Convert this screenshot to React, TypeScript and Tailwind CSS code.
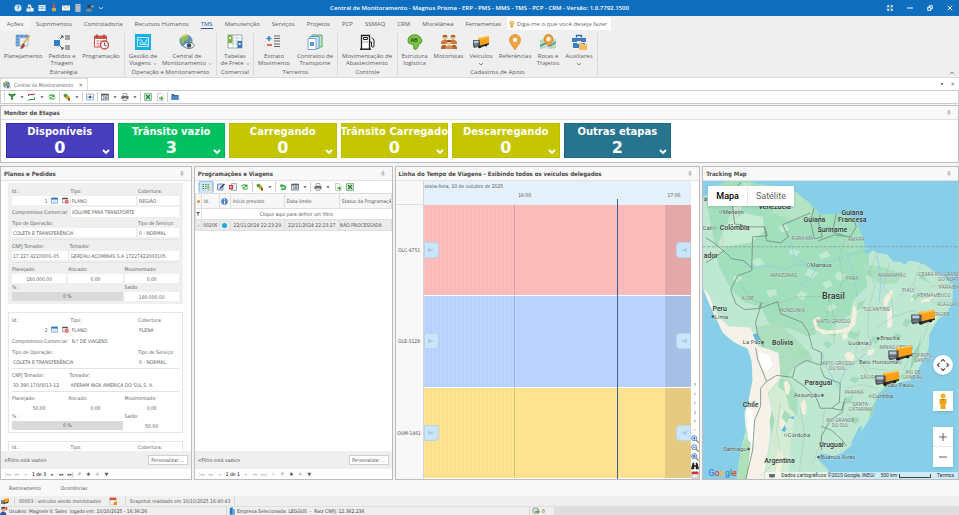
import React, { useId, useState } from "react";

type IconProps = { className?: string };
type Glyph = (p: IconProps) => React.ReactElement;

const draw = (children: React.ReactNode, viewBox = "0 0 16 16"): Glyph =>
  function Drawing({ className = "size-4" }: IconProps) {
    return (
      <svg viewBox={viewBox} className={`${className} shrink-0`} fill="none" aria-hidden="true">
        {children}
      </svg>
    );
  };

/* ---------- ribbon icons ---------- */
const PlanIcon = draw(
  <>
    <path d="M1 1h12v11H1z" fill="#fff" stroke="#a9b4c6" />
    <path d="M1 1h12v3H1zM1 4h4v8H1z" fill="#5b95d6" />
    <path d="M5 1v11M9 1v11M1 4h12M1 7h12M1 10h12" stroke="#b9c7dd" strokeWidth=".7" />
    <path d="M15.5 2 9 10l-1-1 6-8z" fill="#e8a33c" />
    <path d="m8 9 2 2c-1 3-3 4-5 4 1-1 1-4 3-6z" fill="#a3492f" />
  </>,
);
const TriageIcon = draw(
  <>
    <path d="M0 6h6v6H0z" fill="#2f80c8" />
    <path d="M11 1h5v5h-5zM11 11h5v5h-5z" fill="#a2a2a2" />
    <path d="M6 5 9 2M9 2H7m2 0v2M6 12l3 3m0 0H7m2 0v-2" stroke="#444" />
  </>,
);
const ScheduleIcon = draw(
  <>
    <path d="M1.5 2h12v11h-12z" fill="#fff" stroke="#d0564b" />
    <path d="M1 2h13v3H1z" fill="#d0564b" />
    <path d="M4 .5v3M11 .5v3" stroke="#a23a33" strokeWidth="1.4" />
    <path d="M3 7h8M3 9.500h6M3 12h4M5 6v7M8 6v4" stroke="#dd9089" strokeWidth=".8" />
    <circle cx="11.500" cy="11" r="4" fill="#f6f2f2" stroke="#c9463c" strokeWidth="1.300" />
    <path d="M11.500 8.500V11l2 1" stroke="#555" />
  </>,
);
const TripsIcon = draw(
  <>
    <path d="M0 0h16v16H0z" fill="#16aee8" />
    <path d="M2.500 3.500h11v9h-11zM2.500 6H7v3h4V6h2M5 8v2.500h8" stroke="#d6f3fd" strokeWidth=".9" />
  </>,
);
const GlobeEyeIcon = draw(
  <>
    <circle cx="7" cy="7" r="6.500" fill="#5f8fc4" />
    <path d="M3 2c3-2 6-1 7 1L8 6 5 7 4 10C1 8 1 4 3 2zM9 8l4-1c0 3-1 5-3 6z" fill="#8cc152" />
    <path d="M2 4c2-3 5-3.500 7-3" stroke="#f0d080" strokeWidth="1.200" />
    <path d="M4 11.500c3-4 9-4 12 0-3 4-9 4-12 0z" fill="#e9eef4" stroke="#555e6a" strokeWidth=".8" />
    <circle cx="10" cy="11.500" r="2.200" fill="#34506e" />
  </>,
);
const FreightIcon = draw(
  <>
    <path d="M1 1h14v13H1z" fill="#fff" stroke="#9aa8b4" />
    <path d="M1 4h14M1 7h14M1 10h14M6 1v13M10 1v13" stroke="#b2c0cb" strokeWidth=".7" />
    <path d="M1 1h4.500v8H1z" fill="#7db344" />
    <path d="M10.500 7H15v7h-4.500z" fill="#3a78b8" />
    <circle cx="3.200" cy="4" r="1.100" fill="#fff" />
    <circle cx="12.700" cy="10" r="1.100" fill="#fff" />
  </>,
);
const StatementIcon = draw(
  <>
    <path d="M3 2v5M.5 4.500h5" stroke="#2f80c8" strokeWidth="1.500" />
    <path d="M1 11h5" stroke="#d0453a" strokeWidth="1.500" />
    <path d="M8 2h6M8 4.500h6M8 7h6M8 10h6M8 12.500h6" stroke="#555" strokeWidth=".9" />
  </>,
);
const ContractsIcon = draw(
  <>
    <path d="M5 1h10v12H5z" fill="#bfe3c4" stroke="#59a869" />
    <path d="M3 2.500h9v12H3z" fill="#d3e7f8" stroke="#5c9bd1" />
    <path d="M1 4.500h8v11H1z" fill="#fff" stroke="#7aa7cc" />
    <path d="M3 8h4v4H3z" fill="#5c9bd1" />
  </>,
);
const FuelIcon = draw(
  <>
    <path d="M2.500 15V1.500h8V15" fill="#fff" stroke="#222" strokeWidth="1.300" />
    <path d="M1 15.200h11" stroke="#222" strokeWidth="1.500" />
    <path d="M4.500 3.500h4v2h-4zM4.500 8h1m2 0h1" stroke="#222" />
    <path d="M11 8h1.500v4c0 1.600 2.500 1.600 2.500 0V6l-2-2.500" stroke="#222" />
  </>,
);
const AfricaIcon = draw(
  <>
    <path
      d="M2 3c2-2 5-2.500 8-2l3 2 2 4-1 2-2 1-1 3-2 2.500-2-.5-.5-4-2-1-3-1L1 6z"
      fill="#7cc242"
      stroke="#4c9a2a"
    />
    <text x="7" y="8" textAnchor="middle" fontSize="5" fontWeight="bold" fill="#1d4f10" fontFamily="Liberation Sans, sans-serif">AB</text>
  </>,
);
const DriversIcon = draw(
  <>
    <path d="M0 14c0-4 5-4 6-1v2H0zM16 14c0-4-5-4-6-1v2h6z" fill="#b2642c" />
    <circle cx="4" cy="3.500" r="2.300" fill="#e7b483" />
    <circle cx="12" cy="3.500" r="2.300" fill="#e7b483" />
    <path d="M1.500 3c0-3 5-3 5 0zM9.500 3c0-3 5-3 5 0z" fill="#a85f26" />
    <path d="M0 9c0-4 7-4 8-1 1-3 8-3 8 1v1H0z" fill="#c97b39" />
    <circle cx="8" cy="8.500" r="2.300" fill="#f0c49a" />
    <path d="M5.500 8c0-3 5-3 5 0z" fill="#96501f" />
    <path d="M4 15c0-5 8-5 8 0z" fill="#d68b48" />
  </>,
);
const TruckShape = (
  <>
    <path d="m5 4 10-2 1 1v7l-9 3z" fill="#f9a11b" />
    <path d="m5 4 10-2 1 1-9 2z" fill="#ffc861" />
    <path d="M0 6h6l1 .5v6L1 14 0 12z" fill="#4b5058" />
    <path d="M.8 6.800h4.700v2.500H.8z" fill="#b9cbd8" />
    <path d="M1 10.500h4M1 12h4" stroke="#9aa0a7" strokeWidth=".7" />
    <path d="m7 11.500 9-2.500v1.200L7 14z" fill="#333" />
    <circle cx="6.500" cy="13" r="1.300" fill="#1c1c1c" />
    <circle cx="13" cy="11.300" r="1.200" fill="#1c1c1c" />
  </>
);
const TruckIcon = draw(TruckShape);
const PinIcon = draw(
  <>
    <path d="M8 16C6 12 2.500 9.500 2.500 6a5.500 5.500 0 0 1 11 0c0 3.500-3.500 6-5.500 10z" fill="#f2a53a" stroke="#c77b1c" strokeWidth=".6" />
    <circle cx="8" cy="6" r="2.800" fill="#fdf3dd" stroke="#c77b1c" strokeWidth=".6" />
  </>,
);
const RoutesIcon = draw(
  <>
    <path d="m0 6 5-1 5 1 6-1v9l-6 1-5-1-5 1z" fill="#b9dca9" />
    <path d="m5 5 5 1v9l-5-1z" fill="#cfe3f4" />
    <path d="m0 12 6-3 4 3 6-4" stroke="#3b86c8" strokeWidth="1.400" />
    <path d="M8.500 13C7 10 4 8 4 5a4.500 4.500 0 0 1 9 0c0 3-3 5-4.500 8z" fill="#f0a03a" stroke="#b56d18" strokeWidth=".6" />
    <circle cx="8.500" cy="5" r="2.200" fill="#fdf3dd" />
  </>,
);
const CaseIcon = draw(
  <>
    <path d="M5.500 3.500v-2h5v2" stroke="#3270b5" strokeWidth="1.400" />
    <path d="M1 4h14v4H1zM2 9h12v5H2z" fill="#3b7cc4" />
    <path d="M6 7h4v3H6z" fill="#dfe9f5" />
    <path d="M8 9h3l1 1h4v6H8z" fill="#f2bd63" />
  </>,
);

/* ---------- small toolbar icons ---------- */
const FunnelGreen = draw(<><path d="M1 2h14L10 8v7l-4-2V8z" fill="#35a043" /><circle cx="3" cy="3" r="2" fill="#1d6c2a" /><circle cx="13" cy="3" r="2" fill="#1d6c2a" /></>);
const RouteRed = draw(<><path d="M1 3h9M1 3v3m9-3 4-1" stroke="#d0342c" strokeWidth="2.200" /><path d="M4 13h9M4 13l-3 2m12-6v4" stroke="#2fa33e" strokeWidth="2.200" /></>);
const RefreshGreen = draw(<><path d="M1 7c1-5 8-6 10-3l2-2v6H7l2-2C7 4 4 5 4 7z" fill="#33a347" /><path d="M15 9c-1 5-8 6-10 3l-2 2V8h6l-2 2c2 2 5 1 5-1z" fill="#5cbf5c" /></>);
const Puzzle = draw(<><path d="M1 3 6 1l4 4-3 5-5-2z" fill="#4da23f" /><path d="m6 7 5-2 3 4-3 4-5-1z" fill="#d9a326" /><path d="m10 10 4 1v4h-4z" fill="#6c4c1e" /></>);
const FitScreen = draw(<><path d="M1 2h14v12H1z" stroke="#7f9cc6" strokeWidth="1.500" /><path d="M8 3v10M2 8h12" stroke="#7fa1ce" strokeWidth="2" /><path d="M6 6h4v4H6z" fill="#2f5c9c" /></>);
const Layout = draw(<><path d="M1 2h14v12H1z" fill="#eceff2" stroke="#5b6570" strokeWidth="1.500" /><path d="M1 2h14v3H1z" fill="#5b6570" /><circle cx="10" cy="9.500" r="3.500" fill="#8c98a4" /><path d="M5 5v9" stroke="#5b6570" /></>);
const Printer = draw(<><path d="M4 1h8v5H4z" fill="#fff" stroke="#666" /><path d="M1 6h14v6H1z" fill="#6d7176" /><path d="M4 10h8v5H4z" fill="#e9e9e9" stroke="#666" /></>);
const Excel = draw(<><path d="M1 1h14v14H1z" fill="#d6ead9" stroke="#6aa977" strokeWidth="1.500" /><path d="m4 4 8 8m0-8-8 8" stroke="#1f7a36" strokeWidth="2.400" /></>);
const ExportDoc = draw(<><path d="M3 1h7l4 4v10H3z" fill="#fff" stroke="#9a9a9a" /><path d="M6 9h4V6l5 5-5 4v-3H6z" fill="#52b043" /></>);
const FolderBlue = draw(<><path d="M1 2h5l1 2h8v10H1z" fill="#356ba8" /><path d="M1 6h14v8H1z" fill="#4f88c6" /></>);
const GridFilter = draw(<><path d="M1 2h3v2H1zm5 0h3v2H6zm5 0h3v2h-3zM1 6h3v2H1zm5 0h3v2H6zm5 0h3v2h-3zM1 10h3v2H1zm5 0h3v2H6z" fill="#3f9a4c" /><path d="M9 9h7l-2.500 3v3h-2v-3z" fill="#ef9b28" /></>);
const Edit = draw(<><path d="M1 2h11v12H1z" fill="#d4e3f5" stroke="#2f5c9c" strokeWidth="1.300" /><path d="m5 12 1-3 8-8 2 2-8 8z" fill="#333f56" /></>);
const DeleteDoc = draw(<><path d="M5 1h10v14H5z" fill="#e4ecf6" stroke="#5478a8" /><path d="M0 4h8v9H0z" fill="#d62d24" /><path d="m2 6 4 5m0-5-4 5" stroke="#fff" strokeWidth="1.300" /></>);
const Undo = draw(<path d="M7 1v3h3c6 0 6 10 0 10H4v-3h6c2 0 2-4 0-4H7v3L1 5.500z" fill="#2fa33e" />);
const CalBlue = draw(<><path d="M1 2h14v12H1z" fill="#fff" stroke="#4b8ac6" strokeWidth="1.500" /><path d="M1 2h14v4H1z" fill="#2d77bd" /><path d="M1 10h14M6 6v8M10 6v8" stroke="#a9c6e0" /></>);
const CalRed = draw(<><path d="M1 3h12v10H1z" fill="#f3f3f3" stroke="#666" strokeWidth="1.300" /><path d="M1 2h12v3H1z" fill="#4a4a4a" /><circle cx="11" cy="11" r="4.500" fill="#e15b56" /><path d="m8.500 13 5-4" stroke="#fff" strokeWidth="1.300" /></>);
const Info = draw(<><circle cx="8" cy="8" r="7.500" fill="#4f85c4" /><path d="M8 3v2m0 2v6" stroke="#fff" strokeWidth="2.400" /></>);
const Pin = draw(<path d="M5 2h6M6 2v6m4-6v6M3.500 8.500h9M8 9v5" stroke="#8a8a8a" strokeWidth="1.400" />);
const Caret = draw(<path d="M1 3h8L5 8z" fill="#555" />, "0 0 10 10");
const ChevronDown = draw(<path d="m1.500 3.500 3.500 3 3.500-3" stroke="currentColor" strokeWidth="1.200" />, "0 0 10 10");

/* ---------- title bar ---------- */
const quickAccess: { label: string; icon: Glyph; gap: string }[] = [
  { label: "Ajuda", gap: "ml-3.5", icon: draw(<><circle cx="8" cy="8" r="7" fill="#d8ecfb" /><path d="M6 5c1-3 5-1 4 1L8 9v1m0 2v1" stroke="#2b77bd" strokeWidth="2" /></>) },
  { label: "Usuários", gap: "ml-1", icon: draw(<><path d="M4 1h5l2 4v10H3z" fill="#cfe3f5" /><path d="M1 9h5v6H1zm9-1h5v7h-5z" fill="#eef6fc" /><path d="M5 6h3v3H5z" fill="#2c4e78" /></>) },
  { label: "Painel", gap: "ml-1", icon: draw(<><path d="M1 2h14v12H1z" fill="#eaf6ff" /><path d="M2 5h12M8 5v8M2 9h12" stroke="#65b2e4" strokeWidth="1.500" /></>) },
  { label: "Medalha", gap: "ml-1", icon: draw(<><path d="M6 0h4v6H6z" fill="#e44b3c" /><circle cx="8" cy="11" r="4" fill="#f7c33c" /><circle cx="8" cy="11" r="2" fill="#dd7a1e" /></>) },
  { label: "Mensagens", gap: "ml-1", icon: draw(<><path d="M0 3h16v10H0z" fill="#f5f0ea" /><path d="m0 3 8 6 8-6" stroke="#9aa3ad" strokeWidth="1.300" /></>) },
  { label: "Calculadora", gap: "ml-1", icon: draw(<><path d="M3 0h10v16H3z" fill="#c9cdd2" /><path d="M5 2h6v3H5z" fill="#7e98ad" /><path d="M5 8h6M5 11h6M5 14h6" stroke="#80868d" strokeWidth="1.500" strokeDasharray="1.500 .8" /></>) },
  { label: "Suporte", gap: "ml-1", icon: draw(<><circle cx="6" cy="5" r="3.500" fill="#3d3a3c" /><path d="M0 15c0-8 11-8 12 0z" fill="#8f8780" /><path d="m9 6 6-4v5z" fill="#d1a784" /></>) },
];

function TitleBar() {
  return (
    <header className="relative flex h-4 shrink-0 items-center bg-[#106ebe] text-white">
      {quickAccess.map(({ label, icon: I, gap }) => (
        <button key={label} aria-label={label} className={gap}>
          <I className="size-2" />
        </button>
      ))}
      <button aria-label="Personalizar barra" className="ml-1">
        <ChevronDown className="size-1.5" />
      </button>
      <h1 className="absolute inset-x-0 text-center font-['Open_Sans',sans-serif] text-[6px] leading-4 font-semibold">
        Central de Monitoramento - Magnus Prisma - ERP - PMS - MMS - TMS - PCP - CRM - Versão: 1.0.7792.1500
      </h1>
      <div className="relative ml-auto flex items-center gap-3.5 pr-1.5">
        <button aria-label="Tela cheia">
          <svg viewBox="0 0 8 8" className="size-1.5" fill="none" stroke="#fff" strokeWidth="1.300"><path d="m1 1 2 2m2 2 2 2M7 1 5 3M3 5 1 7M1 3V1h2M5 1h2v2M7 5v2H5M3 7H1V5" /></svg>
        </button>
        <button aria-label="Minimizar">
          <svg viewBox="0 0 8 8" className="size-1.5" stroke="#fff" strokeWidth="1.300"><path d="M0 4h8" /></svg>
        </button>
        <button aria-label="Restaurar">
          <svg viewBox="0 0 8 8" className="size-1.5" fill="none" stroke="#fff" strokeWidth="1.300"><path d="M1 3h4v4H1zM3 3V1h4v4H5" /></svg>
        </button>
        <button aria-label="Fechar">
          <svg viewBox="0 0 8 8" className="size-1.5" stroke="#fff" strokeWidth="1.300"><path d="m1 1 6 6m0-6L1 7" /></svg>
        </button>
      </div>
    </header>
  );
}

/* ---------- ribbon ---------- */
const ribbonTabs = ["Suprimentos", "Controladoria", "Recursos Humanos", "TMS", "Manutenção", "Serviços", "Projetos", "PCP", "SSMAQ", "CRM", "Miscelânea", "Ferramentas"];

type Item = { lines: string[]; icon: Glyph; width: string; menu?: boolean };
const ribbonGroups: { title: string; width: string; items: Item[] }[] = [
  {
    title: "Estratégia",
    width: "w-[125px] pl-[3px]",
    items: [
      { lines: ["Planejamento"], icon: PlanIcon, width: "w-10" },
      { lines: ["Pedidos e", "Triagem"], icon: TriageIcon, width: "w-[38px]" },
      { lines: ["Programação"], icon: ScheduleIcon, width: "w-10" },
    ],
  },
  {
    title: "Operação e Monitoramento",
    width: "w-[92px]",
    items: [
      { lines: ["Gestão de", "Viagens"], icon: TripsIcon, width: "w-9", menu: true },
      { lines: ["Central de", "Monitoramento"], icon: GlobeEyeIcon, width: "w-[52px]", menu: true },
    ],
  },
  { title: "Comercial", width: "w-[37px]", items: [{ lines: ["Tabelas", "de Frete"], icon: FreightIcon, width: "w-9", menu: true }] },
  {
    title: "Terceiros",
    width: "w-[84px]",
    items: [
      { lines: ["Extrato", "Movimento"], icon: StatementIcon, width: "w-10" },
      { lines: ["Contratos de", "Transporte"], icon: ContractsIcon, width: "w-[42px]" },
    ],
  },
  { title: "Controle", width: "w-[60px]", items: [{ lines: ["Movimentação de", "Abastecimento"], icon: FuelIcon, width: "w-[58px]" }] },
  {
    title: "Cadastros de Apoio",
    width: "w-[200px]",
    items: [
      { lines: ["Estrutura", "logística"], icon: AfricaIcon, width: "w-[33px]" },
      { lines: ["Motoristas"], icon: DriversIcon, width: "w-[35px]" },
      { lines: ["Veículos", ""], icon: TruckIcon, width: "w-[30px]", menu: true },
      { lines: ["Referências"], icon: PinIcon, width: "w-[38px]" },
      { lines: ["Rotas e", "Trajetos"], icon: RoutesIcon, width: "w-[28px]" },
      { lines: ["Auxiliares", ""], icon: CaseIcon, width: "w-[34px]", menu: true },
    ],
  },
];

function Ribbon() {
  return (
    <div className="shrink-0 border-b border-[#dcdcdc] bg-[#efefef] font-['Open_Sans',sans-serif] text-[6px] text-[#5c5c5c]">
      <nav className="flex h-[15px] items-stretch">
        <button className="w-[30px] bg-[#f5f5f5]">Ações</button>
        {ribbonTabs.map((t) => (
          <button key={t} className="px-1.5">
            <span className={t === "TMS" ? "block border-b border-[#2b579a] pt-px text-[#2b579a]" : ""}>{t}</span>
          </button>
        ))}
        <label className="my-px flex w-[104px] items-center gap-0.5 bg-white pl-0.5">
          <svg viewBox="0 0 8 10" className="h-2 w-1.5"><circle cx="4" cy="4" r="3.500" fill="#f3bf62" /><path d="M2.500 7h3v3h-3z" fill="#b98c45" /></svg>
          <input aria-label="Pesquisar comandos" placeholder="Diga-me o que você deseja fazer" className="w-full bg-transparent outline-none placeholder:text-[#6b6b6b]" />
        </label>
      </nav>
      <div className="flex h-[46px] pt-0.5 pb-px">
        {ribbonGroups.map((g) => (
          <section key={g.title} className={`flex shrink-0 flex-col border-r border-[#dadada] ${g.width}`}>
            <div className="flex flex-1">
              {g.items.map((it) => (
                <button key={it.lines[0]} className={`flex shrink-0 flex-col items-center ${it.width}`}>
                  <it.icon className="mt-px size-4" />
                  {it.lines.map((l, i) => (
                    <span key={i} className={`flex items-center justify-center whitespace-nowrap leading-[7px] ${i === 0 ? "mt-[3px]" : ""}`}>
                      {l}
                      {it.menu && i === it.lines.length - 1 && <ChevronDown className={l ? "ml-0.5 size-1" : "mt-px size-1.5"} />}
                    </span>
                  ))}
                </button>
              ))}
            </div>
            <h2 className="text-center leading-[8px]">{g.title}</h2>
          </section>
        ))}
        <button aria-label="Recolher faixa" className="mr-1 ml-auto self-end">
          <ChevronDown className="size-1.5 rotate-180" />
        </button>
      </div>
    </div>
  );
}

/* ---------- toolbars ---------- */
type Tool = { label: string; icon: Glyph; menu?: boolean; sep?: boolean; active?: boolean };

const mainTools: Tool[] = [
  { label: "Filtrar", icon: FunnelGreen, menu: true },
  { label: "Rotas", icon: RouteRed, menu: true },
  { label: "Atualizar", icon: RefreshGreen },
  { label: "Extensões", icon: Puzzle, menu: true, sep: true },
  { label: "Ajustar", icon: FitScreen, sep: true },
  { label: "Layout", icon: Layout, menu: true, sep: true },
  { label: "Imprimir", icon: Printer, menu: true },
  { label: "Exportar Excel", icon: Excel, sep: true },
  { label: "Exportar", icon: ExportDoc },
  { label: "Pasta", icon: FolderBlue, sep: true },
];
const tripTools: Tool[] = [
  { label: "Linha de filtro", icon: GridFilter, active: true },
  { label: "Editar", icon: Edit, sep: true },
  { label: "Excluir", icon: DeleteDoc },
  { label: "Atualizar", icon: RefreshGreen },
  { label: "Extensões", icon: Puzzle, menu: true, sep: true },
  { label: "Desfazer", icon: Undo, sep: true },
  { label: "Layout", icon: Layout, menu: true },
  { label: "Imprimir", icon: Printer, menu: true, sep: true },
  { label: "Exportar", icon: ExportDoc },
  { label: "Exportar Excel", icon: Excel },
];

function Toolbar({ tools }: { tools: Tool[] }) {
  return (
    <div role="toolbar" className="flex h-3 shrink-0 items-center bg-white pl-[3px]">
      <span className="mr-px h-2 border-l border-dotted border-[#bbb]" />
      {tools.map((t) => (
        <React.Fragment key={t.label}>
          {t.sep && <span className="mx-px h-2.5 w-px bg-[#cfcfcf]" />}
          <button aria-label={t.label} className={`flex h-[11px] items-center px-0.5 ${t.active ? "bg-[#cde6f7] outline outline-[#9ccbee]" : ""}`}>
            <t.icon className="size-2" />
            {t.menu && <Caret className="ml-1 size-1" />}
          </button>
        </React.Fragment>
      ))}
    </div>
  );
}

/* ---------- panels ---------- */
function Panel({ title, pin = true, className = "", children }: { title: string; pin?: boolean; className?: string; children: React.ReactNode }) {
  return (
    <section className={`flex min-h-0 min-w-0 flex-col border border-[#bdbdbd] bg-white ${className}`}>
      <header className="flex h-[14px] shrink-0 items-center justify-between border-b border-[#e2e2e2] bg-[#f8f8f8] pr-1.5 pl-[3px]">
        <h2 className="font-['DejaVu_Sans_Condensed','DejaVu_Sans',sans-serif] text-[6px] font-bold whitespace-nowrap text-[#4a4a4a]">{title}</h2>
        {pin && (
          <button aria-label={`Fixar ${title}`}>
            <Pin className="size-1.5" />
          </button>
        )}
      </header>
      {children}
    </section>
  );
}

const stages = [
  { name: "Disponíveis", count: 0, color: "bg-[#483dbd] border-[#3328b5]" },
  { name: "Trânsito vazio", count: 3, color: "bg-[#03c160] border-[#03b458]" },
  { name: "Carregando", count: 0, color: "bg-[#c5c500] border-[#bdbd00]" },
  { name: "Trânsito Carregado", count: 0, color: "bg-[#c5c500] border-[#bdbd00]" },
  { name: "Descarregando", count: 0, color: "bg-[#c5c500] border-[#bdbd00]" },
  { name: "Outras etapas", count: 2, color: "bg-[#27748f] border-[#1f6a85]" },
];

function Stages() {
  return (
    <Panel title="Monitor de Etapas" className="mt-px shrink-0">
      <div className="grid w-[670px] grid-cols-6 gap-1 pt-[3px] pb-1 pl-[5px]">
        {stages.map((s) => (
          <button key={s.name} className={`relative flex h-[35px] flex-col items-center border font-['DejaVu_Sans',sans-serif] font-bold text-white ${s.color}`}>
            <span className="text-[10px] leading-4 whitespace-nowrap">{s.name}</span>
            <span className="text-[16px] leading-4">{s.count}</span>
            <svg viewBox="0 0 8 6" className="absolute right-[3px] bottom-0.5 h-1.5 w-2" fill="none" stroke="#fff" strokeWidth="1.800"><path d="m1 1 3 3 3-3" /></svg>
          </button>
        ))}
      </div>
    </Panel>
  );
}

function Footer({ count, next }: { count: string; next?: boolean }) {
  const off = "text-[#c4c4c4]";
  const on = "text-[#555]";
  const nav: [string, string, string][] = [
    ["Primeiro", "|◂◂", off],
    ["Página anterior", "◂◂", off],
    ["Anterior", "◂", off],
  ];
  const tail: [string, string, string][] = [
    ["Próximo", "▸", next ? on : off],
    ["Próxima página", "▸▸", next ? on : off],
    ["Último", "▸▸|", next ? on : off],
    ...(next ? [] : ([["Cancelar", "✕", off]] as [string, string, string][])),
    ["Recarregar", "↱", on],
    ["Marcar", "✱", on],
    ["Ir para marca", "✱", off],
    ["Filtro", "▼", on],
  ];
  return (
    <div className="mt-auto shrink-0">
      <div className="flex h-[18px] items-center justify-between bg-[#efefef] pr-[3px] pl-[3px] text-[#555]">
        <span>&lt;Filtro está vazio&gt;</span>
        <button className="h-2.5 w-10 border border-[#cfcfcf] bg-white leading-[8px]">Personalizar ...</button>
      </div>
      <div className="flex h-[10px] items-center bg-white pl-0.5">
        {nav.map(([l, g, c]) => (
          <button key={l} aria-label={l} className={`w-[9px] leading-none ${c}`}>{g}</button>
        ))}
        <span className="w-[18px] text-center">{count}</span>
        {tail.map(([l, g, c]) => (
          <button key={l} aria-label={l} className={`w-[9px] leading-none ${c}`}>{g}</button>
        ))}
      </div>
    </div>
  );
}

/* ---------- plans and orders ---------- */
type Order = {
  id: string; tipo: string; cobertura: string; compromisso: string; operacao: string; servico: string;
  cnpj: string; tomador: string; planejado: string; saldo: string;
};
const orders: Order[] = [
  { id: "1", tipo: "PLANO", cobertura: "REGIÃO", compromisso: "VOLUME PARA TRANSPORTE", operacao: "COLETA E TRANSFERÊNCIA", servico: "0 - NORMAL", cnpj: "17.227.422/0001-05", tomador: "GERDAU AÇOMINAS S.A 17227422000105", planejado: "180.000,00", saldo: "180.000,00" },
  { id: "2", tipo: "PLANO", cobertura: "PLENA", compromisso: "N.º DE VIAGENS", operacao: "COLETA E TRANSFERÊNCIA", servico: "0 - NORMAL", cnpj: "33.390.170/0013-12", tomador: "APERAM INOX AMÉRICA DO SUL S. A.", planejado: "50,00", saldo: "50,00" },
];

function Field({ label, value, align = "text-left", children }: { label: string; value: string; align?: string; children?: React.ReactNode }) {
  const id = useId();
  return (
    <div className="min-w-0">
      <label htmlFor={id} className="block h-[9px] leading-[9px] whitespace-nowrap">{label}</label>
      <div className="flex h-[9px] items-center gap-0.5 bg-white">
        <input id={id} readOnly value={value} className={`h-full w-full min-w-0 bg-transparent px-px outline-none ${align}`} />
        {children}
      </div>
    </div>
  );
}

function OrderCard({ order, selected }: { order: Order; selected: boolean }) {
  const id = useId();
  const rule = <hr className="my-0.5 border-[#e3e3e3]" />;
  return (
    <article className={`shrink-0 border px-[3px] pt-[3px] pb-0.5 ${selected ? "border-[#efefef] bg-[#efefef]" : "border-[#e6e6e6] bg-white"}`}>
      <div className="grid grid-cols-[57fr_66fr_41fr] gap-x-0.5">
        <Field label="Id.:" value={order.id} align="text-right">
          <CalBlue className="mr-0.5 size-[7px]" />
          <CalRed className="size-[7px]" />
        </Field>
        <Field label="Tipo:" value={order.tipo} />
        <Field label="Cobertura:" value={order.cobertura} />
      </div>
      <div className="my-0.5 grid grid-cols-[57fr_109fr] items-center gap-x-0.5">
        <label htmlFor={id} className="whitespace-nowrap">Compromisso Comercial:</label>
        <input id={id} readOnly value={order.compromisso} className="h-2.5 w-full min-w-0 bg-white px-px outline-none" />
      </div>
      <div className="grid grid-cols-[125fr_41fr] gap-x-0.5">
        <Field label="Tipo de Operação:" value={order.operacao} />
        <Field label="Tipo de Serviço:" value={order.servico} />
      </div>
      {rule}
      <div className="grid grid-cols-[56fr_110fr] gap-x-0.5">
        <Field label="CNPJ Tomador:" value={order.cnpj} />
        <Field label="Tomador:" value={order.tomador} />
      </div>
      {rule}
      <div className="grid grid-cols-3 gap-x-0.5">
        <Field label="Planejado:" value={order.planejado} align="text-center" />
        <Field label="Alocado:" value="0,00" align="text-center" />
        <Field label="Movimentado:" value="0,00" align="text-center" />
        <div className="col-span-2">
          <p className="h-[9px] leading-[9px]">% :</p>
          <div role="progressbar" aria-label="Percentual" aria-valuenow={0} className="h-[9px] bg-[#dadada] text-center leading-[9px]">0 %</div>
        </div>
        <Field label="Saldo:" value={order.saldo} align="text-center" />
      </div>
    </article>
  );
}

function OrdersPanel() {
  return (
    <Panel title="Planos e Pedidos">
      <div className="flex min-h-0 flex-1 flex-col gap-2 overflow-hidden pt-0.5 pr-2 pl-[7px] text-[#5f5f5f]">
        {orders.map((o, i) => <OrderCard key={o.id} order={o} selected={i === 0} />)}
        <article className="grid flex-1 grid-cols-[57fr_66fr_41fr] gap-x-0.5 border border-b-0 border-[#e6e6e6] px-[3px] pt-px">
          <span>Id.:</span>
          <span>Tipo:</span>
          <span>Cobertura:</span>
        </article>
      </div>
      <Footer count="1 de 3" next />
    </Panel>
  );
}

/* ---------- trips ---------- */
function TripsPanel() {
  const cell = "overflow-hidden border border-[#dedede] whitespace-nowrap";
  return (
    <Panel title="Programações e Viagens">
      <Toolbar tools={tripTools} />
      <table className="w-full table-fixed border-collapse text-[#555]">
        <colgroup>
          <col className="w-[6px]" /><col className="w-[18px]" /><col className="w-[11px]" />
          <col className="w-[54px]" /><col className="w-[55px]" /><col />
        </colgroup>
        <thead>
          <tr className="h-[15px] bg-[#f7f7f7] text-left">
            <th className={cell}><span className="mx-auto block size-[3px] rounded-full bg-[#ef8b1f]" /></th>
            <th className={`${cell} pl-0.5 font-normal`}>Id.</th>
            <th className={cell}><Info className="mx-auto size-[7px]" /></th>
            <th className={`${cell} pl-0.5 font-normal`}>Início previsto</th>
            <th className={`${cell} pl-0.5 font-normal`}>Data limite</th>
            <th className={`${cell} pl-0.5 font-normal`}>Status da Programação</th>
          </tr>
        </thead>
        <tbody>
          <tr className="h-[11px]">
            <td className={cell}><svg viewBox="0 0 10 10" className="mx-auto size-1"><path d="M0 0h10L6 5v5H4V5z" fill="#666" /></svg></td>
            <td colSpan={5} className="text-center">Clique aqui para definir um filtro</td>
          </tr>
          <tr className="h-[11px] bg-[#ebebeb]">
            <td className={`${cell} text-center`}>›</td>
            <td className={`${cell} text-center`}>00206</td>
            <td className={cell}><span className="mx-auto block size-[5px] rounded-full bg-[#16a7dd]" /></td>
            <td className={`${cell} text-center`}>22/11/2024 22:23:29</td>
            <td className={`${cell} text-center`}>22/11/2024 22:23:27</td>
            <td className={cell}>NÃO PROCESSADA</td>
          </tr>
        </tbody>
      </table>
      <Footer count="1 de 1" />
    </Panel>
  );
}

/* ---------- timeline ---------- */
const vehicles = [
  { plate: "OLC-4751", color: "bg-[#ffbcbc]" },
  { plate: "OLE-3128", color: "bg-[#bad4ff]" },
  { plate: "OUM-1461", color: "bg-[#ffe391]" },
];

const ZoomGlass = ({ sign }: { sign: string }) => (
  <svg viewBox="0 0 10 10" className="size-2" fill="none">
    <circle cx="4" cy="4" r="3.200" fill="#dcebfb" stroke="#4a79b4" />
    <path d={sign} stroke="#2a5b9b" />
    <path d="m6.500 6.500 3 3" stroke="#8c6a3d" strokeWidth="1.500" />
  </svg>
);

const rowSteppers: [string, string][] = [
  ["Primeira linha", "M2 1h4M4 7V3M2 4.500 4 2.500l2 2"],
  ["Página acima", "M2 3.500 4 1.500l2 2M2 6.500l2-2 2 2"],
  ["Página abaixo", "m2 1.500 2 2 2-2M2 4.500l2 2 2-2"],
  ["Última linha", "M2 7h4M4 1v4M2 3.500l2 2 2-2"],
  ["Mais linhas", "M4 1v6M1 4h6"],
  ["Menos linhas", "M1 4h6"],
];

function TimelinePanel() {
  const arrow = "absolute top-1/2 flex h-4 w-[15px] -translate-y-1/2 items-center justify-center border border-[#b4d6ee] bg-[#cbe6f8]";
  return (
    <Panel title="Linha do Tempo de Viagens - Exibindo todos os veículos delegados">
      <div className="flex min-h-0 flex-1 text-[#555]">
        <div className="flex w-7 shrink-0 flex-col border-r border-[#d5d5d5] bg-[#f8f8f8]">
          <div className="h-6 shrink-0 border-b border-[#dcdcdc]" />
          {vehicles.map((v) => (
            <div key={v.plate} className="flex flex-1 items-center justify-center border-b border-[#f8f8f8] whitespace-nowrap">{v.plate}</div>
          ))}
        </div>
        <div className="relative flex min-w-0 flex-1 flex-col">
          <div className="h-6 shrink-0 bg-[#e4f1fa] pl-px">
            <p className="leading-[10px]">sexta-feira, 10 de outubro de 2025</p>
            <div className="grid grid-cols-[92fr_150fr_26fr] leading-[9px]">
              <span />
              <span className="pl-0.5">16:00</span>
              <span className="pl-0.5">17:00</span>
            </div>
          </div>
          {vehicles.map((v) => (
            <div key={v.plate} className={`relative flex-1 border-b border-white ${v.color}`}>
              <div className="grid h-full grid-cols-[92fr_150fr_26fr]">
                <span className="border-r border-black/15 bg-[repeating-linear-gradient(90deg,transparent_0_3px,rgba(0,0,0,0.025)_3px_4px)]" />
                <span className="bg-[repeating-linear-gradient(90deg,transparent_0_3px,rgba(0,0,0,0.025)_3px_4px)]" />
                <span className="bg-black/10" />
              </div>
              <button aria-label={`Viagem anterior ${v.plate}`} className={`${arrow} left-0 rounded-r`}>
                <svg viewBox="0 0 8 8" className="size-1.5" stroke="#8ab6da" fill="none"><path d="M1 1v6M2 4h5M4 2.500 2.500 4 4 5.500" /></svg>
              </button>
              <button aria-label={`Próxima viagem ${v.plate}`} className={`${arrow} right-0 rounded-l`}>
                <svg viewBox="0 0 8 8" className="size-1.5" stroke="#8ab6da" fill="none"><path d="M7 1v6M1 4h5M4 2.500 5.500 4 4 5.500" /></svg>
              </button>
            </div>
          ))}
          <span className="absolute top-[18px] bottom-0 left-[72.4%] w-px bg-[#3f6291]" />
        </div>
        <div className="flex w-2 shrink-0 flex-col items-center justify-end bg-white">
          {rowSteppers.map(([l, d]) => (
            <button key={l} aria-label={l} className="flex h-[9px] items-center">
              <svg viewBox="0 0 8 8" className="size-1" fill="none" stroke="#888"><path d={d} /></svg>
            </button>
          ))}
          <button aria-label="Ampliar" className="h-[9px]"><ZoomGlass sign="M4 2.500v3M2.500 4h3" /></button>
          <button aria-label="Reduzir" className="h-[9px]"><ZoomGlass sign="M2.500 4h3" /></button>
          <button aria-label="Ajustar" className="h-[9px]"><ZoomGlass sign="M3 3h2v2H3z" /></button>
          <button aria-label="Localizar" className="h-[9px]">
            <svg viewBox="0 0 10 10" className="size-2" fill="#222"><path d="M2 1h2v3h2V1h2l2 8H6V6H4v3H0z" /></svg>
          </button>
          <button aria-label="Calendário" className="h-[9px]">
            <svg viewBox="0 0 10 10" className="size-2"><path d="M1 1h8v8H1z" fill="#eee" stroke="#aaa" /><path d="M1 1h8v3H1z" fill="#d22f27" /></svg>
          </button>
        </div>
      </div>
    </Panel>
  );
}

/* ---------- map ---------- */
type Label = [string, number, number];
const countries: Label[] = [
  ["Venezuela", 774, 208], ["Colômbia", 734, 229], ["Guiana", 814, 221], ["Guiana", 852, 214], ["Francesa", 852, 221],
  ["Suriname", 832, 231], ["ador", 710, 257], ["Peru", 719, 310], ["Bolívia", 782, 345],
  ["Paraguai", 818, 385], ["Chile", 750, 407], ["Uruguai", 831, 447], ["Argentina", 779, 463],
];
/* name, dot x, dot y, side of the dot the name stands on, filled dot for a capital */
const cities: [string, number, number, "start" | "end", boolean][] = [
  ["Medelín", 720, 211, "start", false], ["Cali", 714, 227, "end", false], ["Manaus", 808, 264, "start", false],
  ["Lima", 712, 316, "start", true], ["La Paz", 762, 342, "end", true], ["Goiânia", 870, 343, "end", false],
  ["Brasília", 878, 338, "start", true], ["Belo Horizonte", 900, 362, "end", false], ["São Paulo", 885, 385, "start", true],
  ["Assunção", 822, 395, "end", true], ["Curitiba", 870, 396, "start", false], ["Córdoba", 785, 435, "start", false],
  ["Santiago", 748, 449, "end", true], ["Buenos Aires", 818, 457, "start", true],
];
const states: Label[] = [
  ["RORAIMA", 802, 239], ["AMAPÁ", 856, 240], ["AMAZONAS", 783, 276], ["PARÁ", 852, 279], ["MARANHÃO", 892, 276],
  ["CEARÁ", 926, 275], ["RIO GRANDE", 949, 275], ["DO NORTE", 950, 280], ["PIAUÍ", 908, 291], ["PARAÍBA", 949, 288],
  ["PERNAMBUCO", 934, 296], ["ALAGOAS", 948, 305], ["ACRE", 747, 299], ["RONDÔNIA", 792, 311], ["TOCANTINS", 876, 310],
  ["SERGIPE", 940, 315], ["MATO GROSSO", 833, 322], ["MINAS GERAIS", 896, 349], ["ESPÍRITO", 922, 357], ["SANTO", 922, 362],
  ["MATO GROSSO", 837, 365], ["DO SUL", 837, 370], ["SÃO PAULO", 873, 379], ["RIO DE", 913, 374], ["JANEIRO", 913, 379],
  ["PARANÁ", 854, 394], ["SANTA", 860, 406], ["CATARINA", 860, 411], ["RIO GRANDE", 840, 422], ["DO SUL", 840, 427],
];

const LAND =
  "M702 197 707 193 711 185 718 184 724 181 735 180H748L756 183 785 186 797 192 802 197 808 201 815 208 819 213 833 213 847 214 855 219 859 228 862 236 864 245 869 248 877 252 887 254 893 261 900 261 905 264 909 260 917 261 925 264 933 270 945 277 952 283 953 293 952 303 947 312 938 319 933 327 929 335 929 347 923 360 920 366 915 374 910 380 900 382 887 388 878 393 875 402 873 413 867 422 860 433 855 443 848 448 842 453 833 456 820 453 818 460 828 470V480H736L738 463 741 447 745 430 744 413 748 400 752 380 751 360 747 348 733 342 722 332 713 313 707 300 702 287z";

const trucks = [[911, 308], [888, 344], [875, 369]];

function BrazilMap() {
  return (
    <svg viewBox="702 180 256 299" preserveAspectRatio="xMidYMid slice" className="absolute inset-0 size-full" role="img" aria-label="Mapa da América do Sul">
      <defs>
        <clipPath id="land"><path d={LAND} /></clipPath>
      </defs>
      <path d="M702 180h256v299H702z" fill="#87cfe8" />
      <path d={LAND} fill="#bfe8d3" />
      <g clipPath="url(#land)">
        <path d="M702 180h85l20 12 20 18 40 5 2 45-4 10 2 16-14 14-3 14-18 12 4 10-18-4-20-10-14 6-16-6-8-16-16-4-14-14-12-22z" fill="#a2dfbd" />
        <path d="m702 252 14-6 10-22 9-24 8-18h8l-10 24-10 24-12 24-17 10z" fill="#c3e6cd" />
        <path d="m780 184 26 12 8 18-22 6-20-8z" fill="#b4e4c4" />
        <path d="m722 226 22-14 18 4 2 14-14 12-26 4z" fill="#c6ebd3" />
        <path d="m702 288 6 6 8 20 12 12 22 1 8 19 22 7v24l-13 16 5 20-4 34-5 33h-17l4-40-7-20 4-70-45-30z" fill="#f6f2e9" />
        <path d="m758 352 10 2 4 10-6 8-6-8zM746 408l6 2 2 30-6 10z" fill="#fff" />
        <path d="m736 480 5-33 4-10 5 6-4 37z" fill="#aee0b9" />
        <path d="m780 378 10 14 4 24-4 26-2 38h-24l6-36 2-28-4-22z" fill="#d3ecd3" />
        <path d="m757 326 20-4 18 16 14 14 4 8-18 4-8 14-7-2-2-24-22-8z" fill="#addfbf" />
        <path d="m780 378 9 2 8 16 0 20-8-8-4-16-8-6z" fill="#a8dfbe" />
        <path d="m858 262 24 4 20 6-4 10-18 2-12-10zM840 240l16-4 8 10-14 6z" fill="#a9e0bf" />
        <path d="m880 392 9-10 12-4-9 8-10 10-6 24-9 8 4-20zM912 354l6-8 4-16-4 26-8 14z" fill="#98d8b0" />
        <path d="m776 310 20 2 14 8 6 14-8 2-14-6-16-6z" fill="#a6dfbd" />
        {/* dry uplands */}
        <g fill="#f3f0dd">
          <path d="m884 298 5-7 4-2-1 8-4 4-1 6-4-3zM887 311l5-3v18l-5 2zM812 320l6-4 3 3-5 4 3 5 8 2 14-1 8-3 2-8 2-14 4 4-2 16-6 7-12 2-14 1-8-5zM842 334l4-3 2 6-5 3zM921 300l8-3 6-6 5 3-8 3-3 4-8 1zM911 293l5-1-1 6-4 3zM937 316l-5 8-2-4zM844 354l4-3 7 4-3 6-5-1z" />
          <path d="m783 382 4-2 3 7-2 8-3-2zM800 403l4-4 2 6-1 10-4-2zM765 380l3 2-1 12-5 6zM781 408l4 12-3 10-3-6zM778 446l5 10-4 20-4-4zM868 350l7-2-3 6-5 1z" />
        </g>
        <g fill="#a3dcb9">
          <path d="m850 330 9 3-4 6-8-3zM873 335l7 3-4 6-6-4zM857 303l8-4-3 8-6 3zM868 268l6 3-4 5-5-2zM895 332l7 3-4 5-6-3zM905 318l7 2-5 7-5-3zM784 410l6 5-4 8-5-6zM852 376l8 2-5 5-6-3zM845 398l8-3-2 7-7 2zM853 416l7 2-5 6-5-3z" />
          <path d="m799 348 9 3-2 6-8-3zM826 340l6 4-4 4-5-4zM914 292l6 3-5 5-4-4zM898 376l7-3-1 4-7 3zM771 410l3 10-3 14-2-12zM916 272l8 3 6 7-8-3z" />
        </g>
        <g fill="#c0ead2">
          <path d="m750 260 9-3 5 6-9 3zM790 248l10 2-4 5-8-2zM808 268l10 4-6 6-8-4zM735 274l7 3-5 5-5-4zM765 290l10-2 2 6-8 3zM818 254l9-4 3 5-9 4zM800 290l7 4-5 6-6-5zM822 282l8-3 2 6-7 3zM837 270l8 4-5 7-6-5zM778 226l7-3 4 6-8 3zM826 306l7-3 4 4-8 4z" />
        </g>
        {/* rivers */}
        <g fill="none" stroke="#8fd0e4" strokeWidth=".9">
          <path d="m743 262 14 5 12-2 14 4 14-6 14 4 12-4 12-4 10-4 12-3 8-7M790 240l4 16 14 8M818 263l-8 16-12 6M847 256l6 18 4 22M877 256l4 20-2 26M822 353l4 14 12 20 6-16 12-10 10-8" />
        </g>
        <path d="m862 251 8-5 4 3-6 4zM850 446l2-6 6-12 4-3-1 6-6 12z" fill="#87cfe8" />
        <path d="m752 334 4-1 3 6-3 3zM781 430l3-5 2 4-2 3zM788 417l6-1-1 3z" fill="#66b9e8" />
        {/* state lines */}
        <g fill="none" stroke="#93a79d" strokeWidth=".5" strokeDasharray="1.500 1">
          <path d="m735 274 14 24 18 6 20-4 10-4h32l6 28-2 20M835 296l8-16-4-24 6-18M829 296l-3 24-16 10M877 252l-8 20 6 12-6 22-2 24 4 14-12 8M889 262l-6 26 8 6 2 22-18 12M921 262l-8 22-14 12M913 284l12 12 10 6 22-4M919 278l10-4M930 286l28-4M893 316l20-6 16 10-6 20-14 18-6 12M859 330l-4 26 14 12 18 2M845 366l14-6 10 16 10 6M847 388l14-4 16 4M840 402l16 0 14 2M846 414l12 8M780 404l-4 26 4 26-20 20M800 408l4 26-6 44M824 410l-4 34-8 20" />
        </g>
        {/* borders */}
        <g fill="none" stroke="#6f8a80" strokeWidth=".8">
          <path d="m740 181-8 12 0 14 2 16 14 3 16 0 2 14 14 2 8-6-6-12 14-6 14-6M764 226l3 9-15 1-1 34-14 5-7 14 5 14 9 6 14-1 3-6-6 20 2 12 6 12" />
          <path d="m705 262 10-6 8-6-10-8-8-5M723 250l8 8 12 2 9 8M814 206l-4 14 4 18 8-2-4-14 2-8M836 213l-4 18 12 4M852 214l4 12-6 10-16-2-16 6" />
          <path d="m759 308 18-7 3 12 22 9 6 10 4 16 9 4 0 13-15-5-11 6-3 11-16-2-10 6-9-22-2-12" />
          <path d="m792 378 12 8 12 12 4 10 11 0 8-6 1-19-16-6-4-10M766 381l-6 7 0 18-6 14-2 30-7 30M831 408l10 2 4-12M844 402l-2 10-12 8-9 16 0 14M821 426l10 4 11 10 4 6" />
        </g>
      </g>
      <path d="M702 246h256" stroke="#7b9198" strokeWidth=".7" strokeDasharray="3 1.500" />
      <g fontFamily="Roboto, sans-serif" textAnchor="middle" stroke="#fff" strokeOpacity=".5" strokeWidth=".6" paintOrder="stroke">
        {states.map(([t, x, y]) => <text key={t + x + y} x={x} y={y} fontSize="5" fill="#66766f">{t}</text>)}
        {cities.map(([t, x, y, side]) => (
          <text key={t} x={side === "start" ? x + 2 : x - 2} y={y + 2} textAnchor={side} fontSize="6" fill="#48554f">{t}</text>
        ))}
        <text x="703" y="200" textAnchor="start" fontSize="6" fill="#28322f">á</text>
        {countries.map(([t, x, y]) => <text key={t + x + y} x={x} y={y} fontSize="7" fontWeight="500" fill="#28322f">{t}</text>)}
        <text x="833" y="298" fontSize="9" fontWeight="500" fill="#28322f">Brasil</text>
      </g>
      {cities.map(([t, x, y, , capital]) => (
        <circle key={t} cx={x} cy={y} r="1.100" fill={capital ? "#48554f" : "#fff"} stroke="#48554f" strokeWidth=".5" />
      ))}
      {trucks.map(([x, y]) => (
        <svg key={x} x={x} y={y} width="24" height="17" viewBox="0 1 16 14" preserveAspectRatio="none">{TruckShape}</svg>
      ))}
    </svg>
  );
}

function MapPanel() {
  const [mode, setMode] = useState("Mapa");
  return (
    <Panel title="Tracking Map">
      <div className="relative min-h-0 flex-1 overflow-hidden font-[Roboto,sans-serif]">
        <BrazilMap />
        <div className="absolute top-[5px] left-[5px] flex h-5 divide-x divide-[#e8e8e8] bg-white text-[9px] shadow-sm">
          {["Mapa", "Satélite"].map((m) => (
            <button key={m} onClick={() => setMode(m)} className={`px-2 ${mode === m ? "font-medium text-black" : "text-[#666]"}`}>{m}</button>
          ))}
        </div>
        <div className="absolute right-[5px] bottom-3 flex w-5 flex-col text-[#666]">
          <button aria-label="Controles da câmera" className="flex size-5 items-center justify-center rounded-full bg-white shadow-sm">
            <svg viewBox="0 0 14 14" className="size-3.5" fill="none" stroke="#666" strokeWidth="1.400"><path d="m5 3.500 2-2 2 2M5 10.500l2 2 2-2M3.500 5l-2 2 2 2M10.500 5l2 2-2 2" /></svg>
          </button>
          <button aria-label="Street View" className="mt-4 flex size-5 items-center justify-center bg-white shadow-sm">
            <svg viewBox="0 0 10 16" className="h-4 w-2.5"><circle cx="5" cy="3" r="2.500" fill="#f4b22c" /><path d="M1.500 6h7v5H7.500v5h-5v-5h-1z" fill="#f0a41c" /><path d="M3 6h4l-2 2z" fill="#c97d10" /></svg>
          </button>
          <div className="mt-4 flex flex-col divide-y divide-[#e6e6e6] bg-white shadow-sm">
            <button aria-label="Aumentar zoom" className="flex h-5 items-center justify-center"><svg viewBox="0 0 10 10" className="size-2" stroke="#666" strokeWidth="1.300"><path d="M5 0v10M0 5h10" /></svg></button>
            <button aria-label="Diminuir zoom" className="flex h-5 items-center justify-center"><svg viewBox="0 0 10 10" className="size-2" stroke="#666" strokeWidth="1.300"><path d="M0 5h10" /></svg></button>
          </div>
        </div>
        <span className="absolute bottom-px left-[5px] flex text-[9px] leading-[10px] font-medium">
          <span className="text-[#4285f4]">G</span><span className="text-[#ea4335]">o</span><span className="text-[#fbbc05]">o</span>
          <span className="text-[#4285f4]">g</span><span className="text-[#34a853]">l</span><span className="text-[#ea4335]">e</span>
        </span>
        <div className="absolute right-0 bottom-0 flex h-[7px] items-center gap-1.5 bg-white/60 px-1 text-[5px] leading-[7px] whitespace-nowrap text-[#333]">
          <svg viewBox="0 0 8 6" className="h-1 w-1.5"><path d="M0 0h8v5H0z" fill="#444" /><path d="M1 1h6M1 3h6" stroke="#fff" strokeWidth=".7" strokeDasharray="1 .5" /></svg>
          <span>Dados cartográficos ©2025 Google, INEGI</span>
          <span>500 km</span>
          <span className="-ml-1 h-1 w-8 border border-t-0 border-[#444]" />
          <a href="#termos">Termos</a>
        </div>
      </div>
    </Panel>
  );
}

/* ---------- status bars ---------- */
function StatusBars() {
  return (
    <footer className="shrink-0 text-[#555]">
      <nav className="flex h-4 items-center gap-5 bg-[#f8f8f8] pl-[9px]">
        <button>Rastreamento</button>
        <button>Ocorrências</button>
      </nav>
      <div className="flex h-2.5 items-center bg-[#efefef]">
        <TruckIcon className="mx-px size-2" />
        <span className="ml-1 border-l border-[#d4d4d4] pl-1">00003 : veículos sendo monitorados</span>
        <svg viewBox="0 0 10 10" className="ml-2 size-2"><path d="M1 1h8v8H1z" fill="#fff" stroke="#bbb" /><path d="M1 1h8v3H1z" fill="#df4a32" /><path d="M6 6h4v4H6z" fill="#f08a24" /></svg>
        <span className="ml-2 border-x border-[#d4d4d4] px-1">Snapshot realizado em 10/10/2025 16:40:43</span>
      </div>
      <div className="flex h-[9px] items-center border-t border-[#dedede] bg-[#efefef] text-[#444]">
        <svg viewBox="0 0 10 10" className="size-2"><circle cx="4" cy="3" r="2.500" fill="#e9a87c" /><path d="M0 10c0-6 8-6 8 0z" fill="#2d5fae" /><path d="M1 2c1-3 5-3 6 0z" fill="#333" /><path d="M7 0h2v4H7z" fill="#e2412f" /></svg>
        <span className="w-[219px] border-r border-[#d4d4d4] pl-px">Usuário: Magnele V. Sales &nbsp;logado em: 10/10/2025 - 16:36:26</span>
        <svg viewBox="0 0 8 10" className="ml-0.5 h-2 w-1.5"><path d="M1 1 5 0v10H1z" fill="#2378c4" /><path d="M5 2l3 1v7H5z" fill="#63aee6" /></svg>
        <span className="w-[295px] border-r border-[#d4d4d4] pl-0.5">Empresa Selecionada: LEGGUS &nbsp;- &nbsp;Raiz CNPJ: 12.362.236</span>
        <svg viewBox="0 0 10 10" className="ml-0.5 size-2"><circle cx="4.500" cy="4.500" r="3.500" fill="#ddd" stroke="#aaa" strokeWidth="1.500" /><path d="M4 5h3V3l3 3-3 3V7H4z" fill="#49b53a" /></svg>
        <span className="w-3.5 pl-0.5">0</span>
        <span className="h-full flex-1 bg-[#dedede]" />
      </div>
    </footer>
  );
}

export default function App() {
  return (
    <div className="flex h-screen flex-col overflow-hidden bg-[#f3f3f3] font-['DejaVu_Sans_Condensed','DejaVu_Sans',sans-serif] text-[5px] leading-[8px]">
      <TitleBar />
      <Ribbon />
      <div className="flex h-3 shrink-0 items-stretch bg-white text-[#666]">
        <div className="flex w-[88px] items-center border border-b-0 border-[#dcdcdc] pl-0.5">
          <GlobeEyeIcon className="size-2" />
          <span className="ml-[3px] whitespace-nowrap">Central de Monitoramento</span>
          <button aria-label="Fechar aba" className="ml-auto pr-1 text-[6px]">×</button>
        </div>
        <div className="ml-auto flex items-center gap-1.5 pr-1">
          <button aria-label="Lista de abas"><Caret className="size-1" /></button>
          <button aria-label="Fechar documento" className="text-[6px]">×</button>
        </div>
      </div>
      <div className="shrink-0 border border-[#cccccc]">
        <Toolbar tools={mainTools} />
      </div>
      <Stages />
      <main className="mt-[3px] grid min-h-0 flex-1 grid-cols-[192fr_199fr_306fr_257fr] grid-rows-1 gap-0.5">
        <OrdersPanel />
        <TripsPanel />
        <TimelinePanel />
        <MapPanel />
      </main>
      <StatusBars />
    </div>
  );
}
